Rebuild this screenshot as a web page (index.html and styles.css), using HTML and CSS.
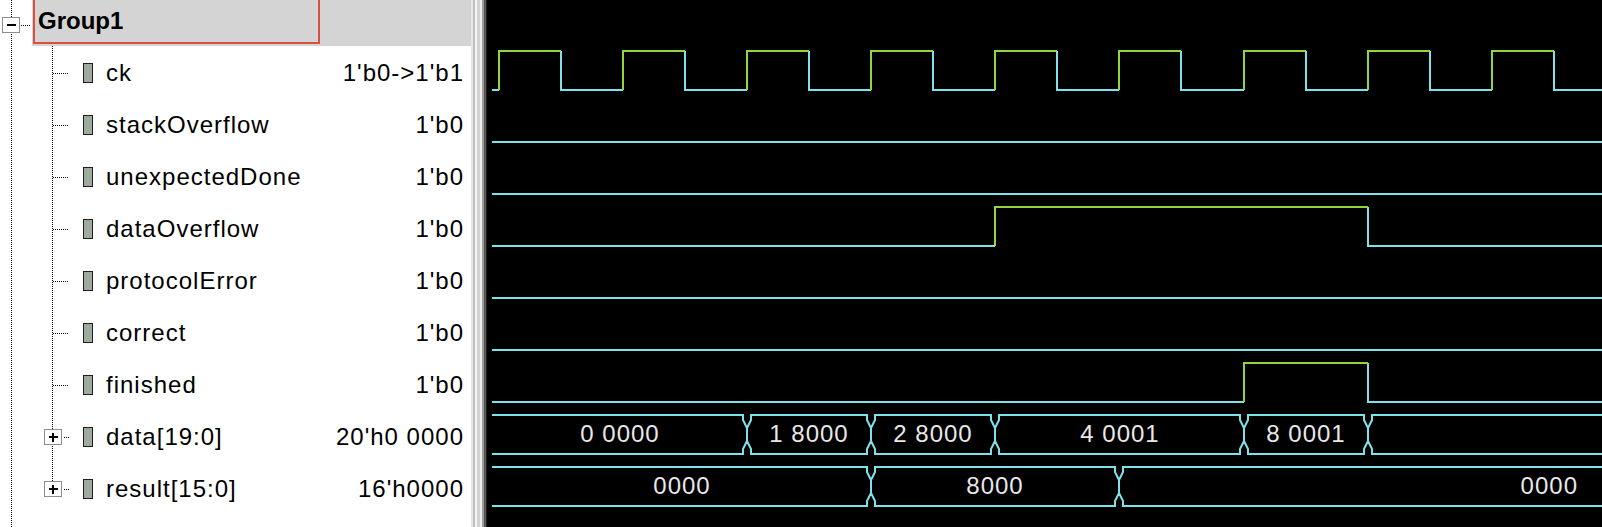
FILE: index.html
```html
<!DOCTYPE html>
<html lang="en">
<head>
    <meta charset="UTF-8">
    <meta name="viewport" content="width=device-width, initial-scale=1.0">
    <title>Waveform</title>
    <link rel="stylesheet" href="styles.css">
</head>
<body>
<div class="viewer">
    <div class="names">
        <div class="group-head">
            <div class="twisty"><span class="toggle minus"></span><span class="dots"></span></div>
            <div class="group-bar"><div class="group-label">Group1</div></div>
        </div>
        <ul class="signals">
            <li class="sig"><span class="twig"><span class="dots"></span></span><span class="chip"></span><span class="name">ck</span><span class="val">1'b0-&gt;1'b1</span></li>
            <li class="sig"><span class="twig"><span class="dots"></span></span><span class="chip"></span><span class="name">stackOverflow</span><span class="val">1'b0</span></li>
            <li class="sig"><span class="twig"><span class="dots"></span></span><span class="chip"></span><span class="name">unexpectedDone</span><span class="val">1'b0</span></li>
            <li class="sig"><span class="twig"><span class="dots"></span></span><span class="chip"></span><span class="name">dataOverflow</span><span class="val">1'b0</span></li>
            <li class="sig"><span class="twig"><span class="dots"></span></span><span class="chip"></span><span class="name">protocolError</span><span class="val">1'b0</span></li>
            <li class="sig"><span class="twig"><span class="dots"></span></span><span class="chip"></span><span class="name">correct</span><span class="val">1'b0</span></li>
            <li class="sig"><span class="twig"><span class="dots"></span></span><span class="chip"></span><span class="name">finished</span><span class="val">1'b0</span></li>
            <li class="sig"><span class="twig"><span class="toggle plus"></span><span class="dots short"></span></span><span class="chip"></span><span class="name">data[19:0]</span><span class="val">20'h0 0000</span></li>
            <li class="sig last"><span class="twig"><span class="toggle plus"></span><span class="dots short"></span></span><span class="chip"></span><span class="name">result[15:0]</span><span class="val">16'h0000</span></li>
        </ul>
    </div>
    <div class="splitter"></div>
    <div class="waves">
        <svg class="trace" width="1115" height="527" viewBox="0 0 1115 527">
            <!-- ck -->
            <path class="lo" d="M5 90H12 M74 51V90H136 M198 51V90H260 M322 51V90H384 M446 51V90H508 M570 51V90H632 M694 51V90H757 M819 51V90H881 M943 51V90H1005 M1067 51V90H1115"/>
            <path class="hi" d="M12 90V51H74 M136 90V51H198 M260 90V51H322 M384 90V51H446 M508 90V51H570 M632 90V51H694 M757 90V51H819 M881 90V51H943 M1005 90V51H1067"/>
            <!-- stackOverflow, unexpectedDone -->
            <path class="lo" d="M5 142H1115 M5 194H1115"/>
            <!-- dataOverflow -->
            <path class="lo" d="M5 246H508 M881 207V246H1115"/>
            <path class="hi" d="M508 246V207H881"/>
            <!-- protocolError, correct -->
            <path class="lo" d="M5 298H1115 M5 350H1115"/>
            <!-- finished -->
            <path class="lo" d="M5 402H757 M881 363V402H1115"/>
            <path class="hi" d="M757 402V363H881"/>
            <!-- data[19:0] -->
            <path class="lo" d="M5 415H256V420L260 428V441L256 449V454H5
                M264 415H380V420L384 428V441L380 449V454H264V449L260 441V428L264 420Z
                M388 415H504V420L508 428V441L504 449V454H388V449L384 441V428L388 420Z
                M512 415H753V420L757 428V441L753 449V454H512V449L508 441V428L512 420Z
                M761 415H877V420L881 428V441L877 449V454H761V449L757 441V428L761 420Z
                M1115 415H885V420L881 428V441L885 449V454H1115"/>
            <text class="bus-val" x="133" y="442">0 0000</text>
            <text class="bus-val" x="322" y="442">1 8000</text>
            <text class="bus-val" x="446" y="442">2 8000</text>
            <text class="bus-val" x="633" y="442">4 0001</text>
            <text class="bus-val" x="819" y="442">8 0001</text>
            <!-- result[15:0] -->
            <path class="lo" d="M5 467H380V472L384 480V493L380 501V506H5
                M388 467H628V472L632 480V493L628 501V506H388V501L384 493V480L388 472Z
                M1115 467H636V472L632 480V493L636 501V506H1115"/>
            <text class="bus-val" x="195" y="494">0000</text>
            <text class="bus-val" x="508" y="494">8000</text>
            <text class="bus-val end" x="1091" y="494">0000</text>
        </svg>
    </div>
</div>
</body>
</html>
```

FILE: styles.css
```css
html, body {
    margin: 0;
    height: 100%;
    overflow: hidden;
    background: #000000;
}
.viewer {
    display: flex;
    height: 527px;
    font-family: "Liberation Sans", Arial, sans-serif;
}
.names {
    width: 471px;
    flex: none;
    background: #ffffff linear-gradient(#000 50%, transparent 0) 11px 0 / 1px 2px repeat-y;
    color: #000000;
}
.group-head {
    display: flex;
    height: 46px;
}
.twisty {
    width: 30px;
    padding-left: 2px;
    display: flex;
    align-items: center;
    padding-top: 4px;
}
.toggle {
    width: 18px;
    height: 16px;
    box-sizing: border-box;
    border: 1px solid #8e8e8e;
    flex: none;
    background: #ffffff;
}
.toggle.minus {
    background: linear-gradient(#000, #000) center / 9px 2px no-repeat, #ffffff;
}
.toggle.plus {
    background:
        linear-gradient(#000, #000) center / 9px 2px no-repeat,
        linear-gradient(#000, #000) center / 2px 9px no-repeat,
        #ffffff;
}
.dots {
    height: 1px;
    background: linear-gradient(to right, #000 50%, transparent 0) 0 0 / 2px 1px repeat-x;
}
.twisty .dots {
    width: 10px;
    margin-left: 1px;
}
.group-bar {
    flex: 1;
    background: #d4d4d4;
    padding-left: 1px;
}
.group-label {
    width: 287px;
    height: 44px;
    box-sizing: border-box;
    border: 2px solid #dc4e40;
    border-top: none;
    padding-left: 3px;
    display: flex;
    align-items: center;
    font-weight: bold;
    font-size: 24px;
}
.signals {
    list-style: none;
    margin: 0;
    padding: 0;
}
.sig {
    display: flex;
    align-items: center;
    height: 52px;
    box-sizing: border-box;
    padding: 2px 7px 0 44px;
    font-size: 24px;
    letter-spacing: 1px;
    background: linear-gradient(#000 50%, transparent 0) 52px 0 / 1px 2px repeat-y;
}
.sig.last {
    background:
        linear-gradient(#fff, #fff) 52px 100% / 1px 24px no-repeat,
        linear-gradient(#000 50%, transparent 0) 52px 0 / 1px 2px repeat-y;
}
.twig {
    width: 27px;
    display: flex;
    align-items: center;
    flex: none;
}
.twig .dots {
    margin-left: 9px;
    width: 15px;
}
.twig .dots.short {
    margin-left: 2px;
    width: 6px;
}
.chip {
    width: 10px;
    height: 20px;
    box-sizing: border-box;
    border: 1px solid #1e1e1e;
    background: #9cab9c;
    margin-left: 12px;
    margin-right: 13px;
    flex: none;
}
.name {
    flex: 1;
    white-space: nowrap;
}
.val {
    white-space: nowrap;
}
.splitter {
    width: 16px;
    flex: none;
    background: linear-gradient(to right,
        #e6e6e6 0 2px, #bdbdbd 2px 4px, #f4f4f4 4px 6px, #d2d2d2 6px 9px,
        #eeeeee 9px 11px, #9a9a9a 11px 13px, #555555 13px 15px, #222222 15px 16px);
}
.waves {
    flex: 1;
    background: #000000;
    overflow: hidden;
}
.trace {
    display: block;
}
.trace path {
    fill: none;
    stroke-width: 2;
}
.trace .lo {
    stroke: #7fe1e9;
}
.trace .hi {
    stroke: #90d63c;
}
.bus-val {
    font-family: "Liberation Sans", Arial, sans-serif;
    font-size: 24px;
    letter-spacing: 1px;
    fill: #e8e8e8;
    text-anchor: middle;
}
.bus-val.end {
    text-anchor: end;
}
```
